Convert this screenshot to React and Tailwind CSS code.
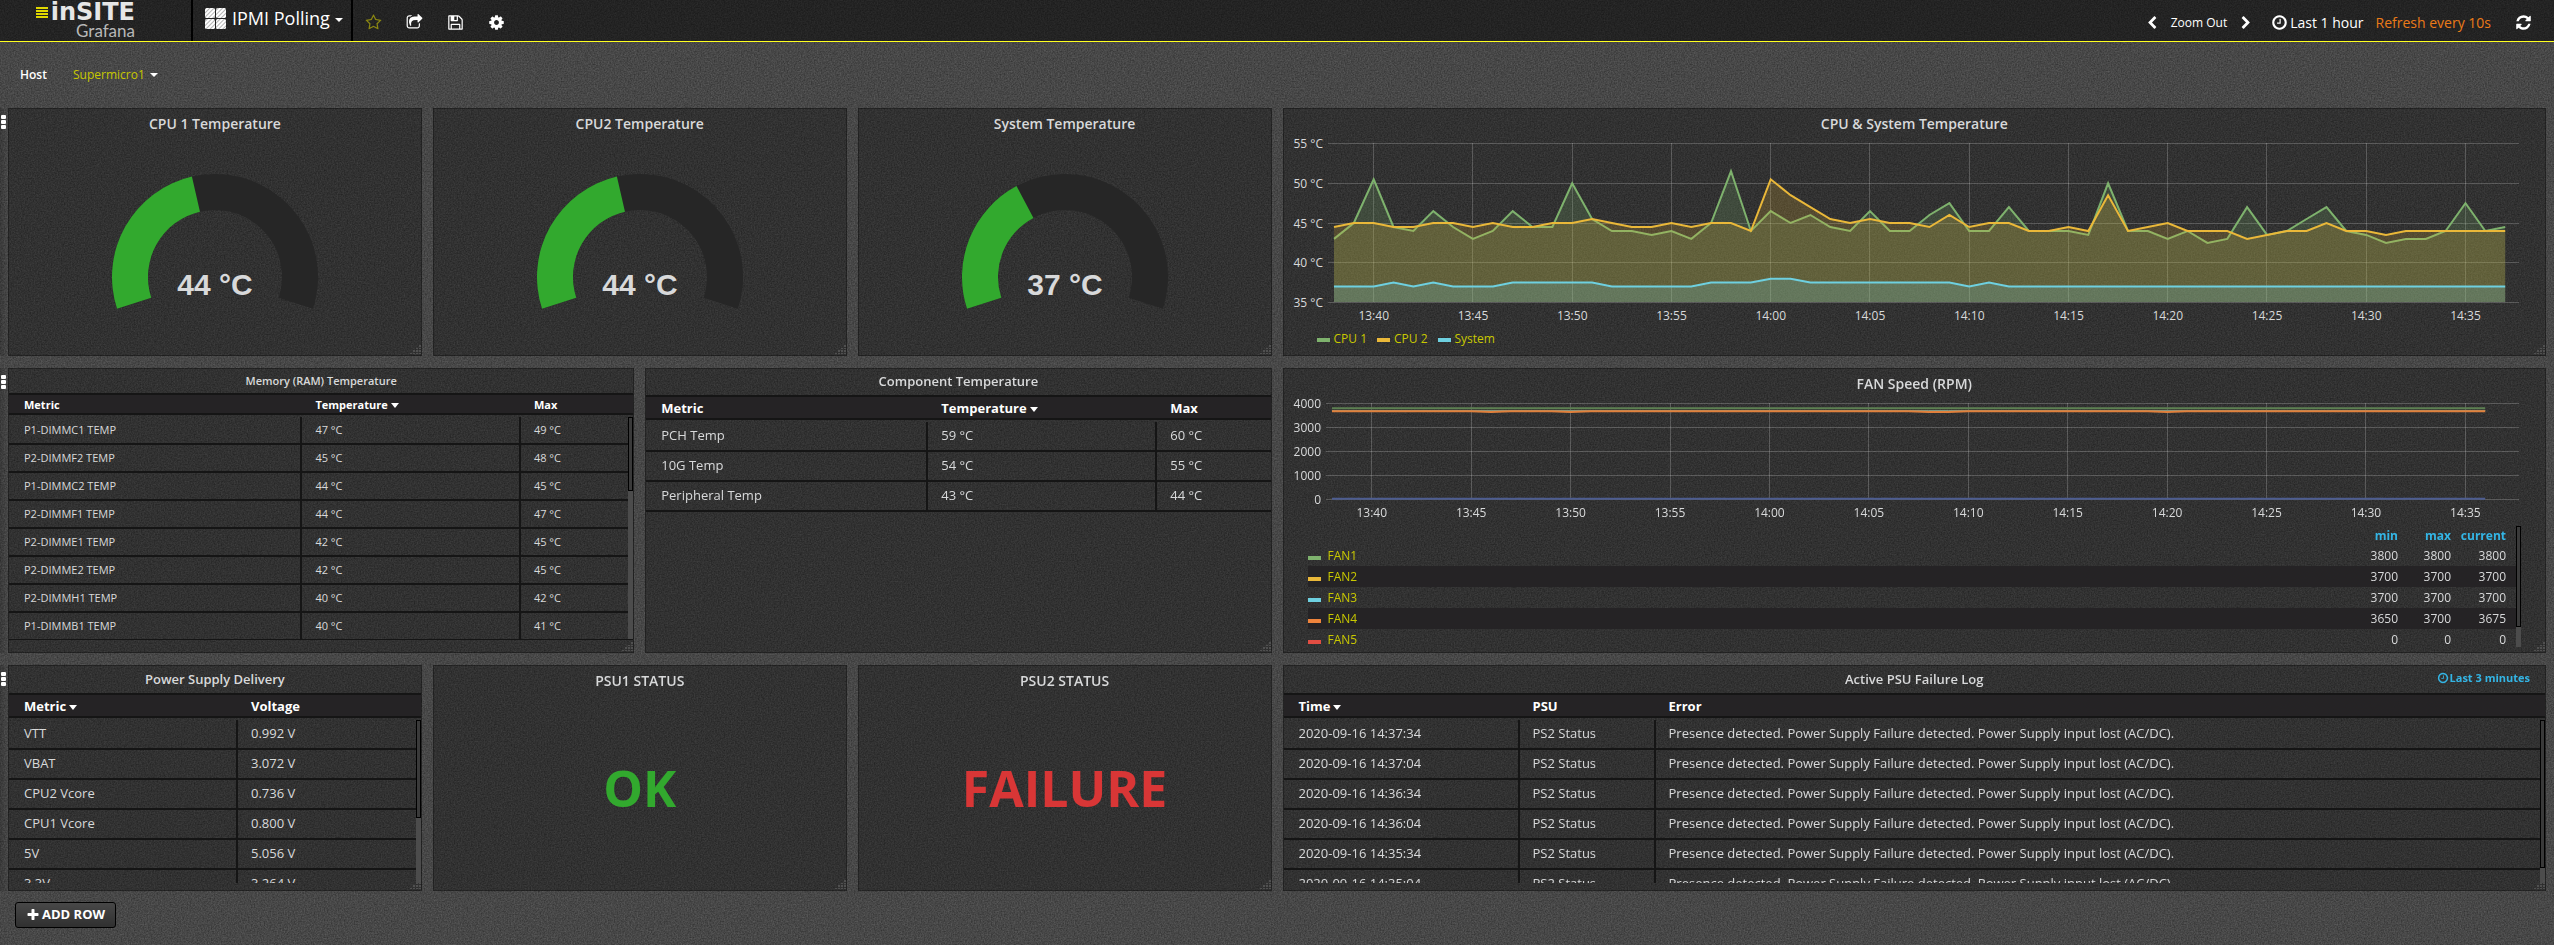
import { useEffect, useRef, useState } from "react";

/* ---------- icons (1792 unit grid) ---------- */

const ICONS = {
  star: "M1201 1004l306-297-422-62-189-382-189 382-422 62 306 297-73 421 378-199 377 199zm527-357q0 22-26 48l-363 354 86 500q1 7 1 20 0 50-41 50-19 0-40-12l-449-236-449 236q-22 12-40 12-21 0-31.5-14.5t-10.5-35.5q0-6 2-20l86-500-364-354q-25-27-25-48 0-37 56-46l502-73 225-455q19-41 49-41t49 41l225 455 502 73q56 9 56 46z",
  share: "M1472 989v259q0 119-84.5 203.5t-203.5 84.5h-832q-119 0-203.5-84.5t-84.5-203.5v-832q0-119 84.5-203.5t203.5-84.5h255q13 0 22.5 9.5t9.5 22.5q0 27-26 32-77 26-133 60-10 4-16 4h-112q-66 0-113 47t-47 113v832q0 66 47 113t113 47h832q66 0 113-47t47-113v-214q0-19 18-29 28-13 54-37 16-16 35-8 21 9 21 29zm237-496l-384 384q-18 19-45 19-12 0-25-5-39-17-39-59v-192h-160q-323 0-438 131-119 137-74 473 3 23-20 34-8 2-12 2-16 0-26-13-10-14-21-31t-39.5-68.5-49.5-99.5-38.5-114-17.5-122q0-49 3.5-91t14-90 28-88 47-81.5 68.5-74 94.5-61.5 124.5-48.5 159.5-30.5 196.5-11h160v-192q0-42 39-59 13-5 25-5 26 0 45 19l384 384q19 19 19 45t-19 45z",
  save: "M512 1536h768v-384h-768v384zm896 0h128v-896q0-14-10-38.5t-20-34.5l-281-281q-10-10-34-20t-39-10v416q0 40-28 68t-68 28h-576q-40 0-68-28t-28-68v-416h-128v1280h128v-416q0-40 28-68t68-28h832q40 0 68 28t28 68v416zm-384-928v-320q0-13-9.5-22.5t-22.5-9.5h-192q-13 0-22.5 9.5t-9.5 22.5v320q0 13 9.5 22.5t22.5 9.5h192q13 0 22.5-9.5t9.5-22.5zm640 32v928q0 40-28 68t-68 28h-1344q-40 0-68-28t-28-68v-1344q0-40 28-68t68-28h928q40 0 88 20t76 48l280 280q28 28 48 76t20 88z",
  cog: "M1152 896q0-106-75-181t-181-75-181 75-75 181 75 181 181 75 181-75 75-181zm512-109v222q0 12-8 23t-20 13l-185 28q-19 54-39 91 35 50 107 138 10 12 10 25t-9 23q-27 37-99 108t-94 71q-12 0-26-9l-138-108q-44 23-91 38-16 136-29 186-7 28-36 28h-222q-14 0-24.5-8.5t-11.5-21.5l-28-184q-49-16-90-37l-141 107q-10 9-25 9-14 0-25-11-126-114-165-168-7-10-7-23 0-12 8-23 15-21 51-66.5t54-70.5q-27-50-41-99l-183-27q-13-2-21-12.5t-8-23.5v-222q0-12 8-23t19-13l186-28q14-46 39-92-40-57-107-138-10-12-10-24 0-10 9-23 26-36 98.5-107.5t94.5-71.5q13 0 26 10l138 107q44-23 91-38 16-136 29-186 7-28 36-28h222q14 0 24.5 8.5t11.5 21.5l28 184q49 16 90 37l142-107q9-9 24-9 13 0 25 10 129 119 165 170 7 8 7 22 0 12-8 23-15 21-51 66.5t-54 70.5q26 50 41 98l183 28q13 2 21 12.5t8 23.5z",
  refresh: "M1639 1056q0 5-1 7-64 268-268 434.5t-478 166.5q-146 0-282.5-55t-243.5-157l-129 129q-19 19-45 19t-45-19-19-45v-448q0-26 19-45t45-19h448q26 0 45 19t19 45-19 45l-137 137q71 66 161 102t187 36q134 0 250-65t186-179q11-17 53-117 8-23 30-23h192q13 0 22.5 9.5t9.5 22.5zm25-800v448q0 26-19 45t-45 19h-448q-26 0-45-19t-19-45 19-45l138-138q-148-137-349-137-134 0-250 65t-186 179q-11 17-53 117-8 23-30 23h-199q-13 0-22.5-9.5t-9.5-22.5v-7q65-268 270-434.5t480-166.5q146 0 284 55.5t245 156.5l130-129q19-19 45-19t45 19 19 45z",
  clock: "M1024 544v448q0 14-9 23t-23 9h-320q-14 0-23-9t-9-23v-64q0-14 9-23t23-9h224v-352q0-14 9-23t23-9h64q14 0 23 9t9 23zm416 352q0-148-73-273t-198-198-273-73-273 73-198 198-73 273 73 273 198 198 273 73 273-73 198-198 73-273zm224 0q0 209-103 385.5t-279.5 279.5-385.5 103-385.5-103-279.5-279.5-103-385.5 103-385.5 279.5-279.5 385.5-103 385.5 103 279.5 279.5 103 385.5z",
  left: "M1427 301l-531 531 531 531q19 19 19 45t-19 45l-166 166q-19 19-45 19t-45-19l-742-742q-19-19-19-45t19-45l742-742q19-19 45-19t45 19l166 166q19 19 19 45t-19 45z",
  right: "M365 301l531 531-531 531q-19 19-19 45t19 45l166 166q19 19 45 19t45-19l742-742q19-19 19-45t-19-45l-742-742q-19-19-45-19t-45 19l-166 166q-19 19-19 45t19 45z",
  plus: "M1600 736v192q0 40-28 68t-68 28h-416v416q0 40-28 68t-68 28h-192q-40 0-68-28t-28-68v-416h-416q-40 0-68-28t-28-68v-192q0-40 28-68t68-28h416v-416q0-40 28-68t68-28h192q40 0 68 28t28 68v416h416q40 0 68 28t28 68z",
};

function Icon({ name, className = "size-4" }) {
  return (
    <svg viewBox="0 0 1792 1792" fill="currentColor" aria-hidden="true" className={`shrink-0 ${className}`}>
      <path d={ICONS[name]} />
    </svg>
  );
}

function Caret() {
  return (
    <svg viewBox="0 0 8 4" fill="currentColor" aria-hidden="true" className="h-1 w-2 shrink-0">
      <path d="M0 0h8L4 4z" />
    </svg>
  );
}

function Tiles() {
  return (
    <svg viewBox="0 0 21 21" aria-hidden="true" className="size-[21px]">
      <defs>
        <pattern id="hatch" width="3" height="3" patternUnits="userSpaceOnUse" patternTransform="rotate(45)">
          <rect width="3" height="3" fill="#ffffff" />
          <rect width="1" height="3" fill="#b4b4b4" />
        </pattern>
      </defs>
      {[0, 11].map((x) =>
        [0, 11].map((y) => <rect key={`${x}${y}`} x={x} y={y} width="10" height="10" rx="1.5" fill="url(#hatch)" />)
      )}
    </svg>
  );
}

/* ---------- page furniture ---------- */

function Texture() {
  return (
    <svg aria-hidden="true" className="absolute inset-0 -z-10 size-full">
      <filter id="grain" x="0" y="0" width="100%" height="100%" colorInterpolationFilters="sRGB">
        <feTurbulence type="fractalNoise" baseFrequency="0.7" numOctaves="2" seed="4" />
        <feColorMatrix values="0.2 0 0 0 0.18  0.2 0 0 0 0.18  0.2 0 0 0 0.18  0 0 0 0 1" />
      </filter>
      <rect width="100%" height="100%" filter="url(#grain)" />
    </svg>
  );
}

function Logo() {
  return (
    <a href="#home" className="flex h-full w-[193px] shrink-0 flex-col items-end border-r-2 border-black pt-px pr-14">
      <span className="flex items-center gap-[3px]">
        <span className="flex flex-col gap-[1px]">
          <span className="h-[2px] w-3 bg-[#e0d800]" />
          <span className="h-[2px] w-3 bg-[#e0d800]" />
          <span className="h-[2px] w-3 bg-[#e0d800]" />
          <span className="h-[2px] w-3 bg-[#e0d800]" />
        </span>
        <span className="font-['DejaVu_Sans',sans-serif] text-2xl leading-[22px] font-bold text-[#e6e6e6]">inSITE</span>
      </span>
      <span className="font-['Lato',sans-serif] text-[17px] leading-[15px] text-[#b8b8b8]">Grafana</span>
    </a>
  );
}

function TopBar() {
  return (
    <header className="flex h-[42px] items-center border-b border-[#ffff20] bg-black/50 text-white">
      <Logo />
      <button type="button" className="flex h-full items-center border-r-2 border-black pr-2 pl-3 pb-[5px]">
        <Tiles />
        <span className="ml-[6px] text-lg">IPMI Polling</span>
        <span className="mt-1 ml-[5px]"><Caret /></span>
      </button>
      <div className="flex items-center gap-6 pt-1 pl-3">
        <button type="button" aria-label="Mark as favorite" className="text-[#8c8812]"><Icon name="star" className="size-[17px]" /></button>
        <button type="button" aria-label="Share dashboard"><Icon name="share" className="size-[17px]" /></button>
        <button type="button" aria-label="Save dashboard"><Icon name="save" className="size-[17px]" /></button>
        <button type="button" aria-label="Settings"><Icon name="cog" className="size-[17px]" /></button>
      </div>
      <div className="ml-auto flex items-center pt-1 pr-[22px]">
        <button type="button" aria-label="Shift time range back"><Icon name="left" className="size-[14px]" /></button>
        <button type="button" className="mx-3 text-xs">Zoom Out</button>
        <button type="button" aria-label="Shift time range forward"><Icon name="right" className="size-[14px]" /></button>
        <button type="button" className="ml-[18px] flex items-center gap-[2px] text-sm">
          <Icon name="clock" className="size-[17px]" />
          Last 1 hour
        </button>
        <button type="button" className="ml-3 text-sm text-[#eb7b18]">Refresh every 10s</button>
        <button type="button" aria-label="Refresh" className="ml-6"><Icon name="refresh" className="size-[17px]" /></button>
      </div>
    </header>
  );
}

function Row({ height, children }) {
  return (
    <section className={`flex ${height}`}>
      <button type="button" aria-label="Row menu" className="flex w-2 shrink-0 flex-col gap-[1px] bg-linear-to-r from-black/20 to-transparent pt-[7px] pl-[1px]">
        <span className="h-1 w-[5px] rounded-[1px] bg-white" />
        <span className="h-1 w-[5px] rounded-[1px] bg-white" />
        <span className="h-1 w-[5px] rounded-[1px] bg-white" />
      </button>
      <div className="grid min-w-0 flex-1 grid-cols-12 gap-[11px]">{children}</div>
    </section>
  );
}

function Panel({ span, title, titleClass = "h-[31px] pb-px text-sm", info, children }) {
  return (
    <article className={`relative flex min-h-0 min-w-0 flex-col border border-black/30 bg-black/30 ${span}`}>
      <h2 className={`flex shrink-0 items-center justify-center font-semibold text-[#d8d9da] ${titleClass}`}>{title}</h2>
      {info && (
        <span className="absolute top-[5px] right-[15px] flex items-center gap-[1px] text-[11px] font-bold text-[#33b5e5]">
          <Icon name="clock" className="size-3" />
          {info}
        </span>
      )}
      {children}
      <svg viewBox="0 0 11 10" fill="#505050" aria-hidden="true" className="absolute right-0 bottom-0 h-[10px] w-[11px]">
        <path d="M9 0h2v2H9zM9 3h2v1H9zM6 3h2v1H6zM9 5h2v2H9zM6 5h2v2H6zM3 5h2v2H3zM9 8h2v1H9zM6 8h2v1H6zM3 8h2v1H3zM0 8h2v1H0z" />
      </svg>
    </article>
  );
}

function Scrollbar({ place, thumb }) {
  return (
    <div aria-hidden="true" className={`absolute w-[5px] bg-[#4c4c4c] ${place}`}>
      <div className={`border border-black bg-[#3a3a3a] ${thumb}`} />
    </div>
  );
}

/* ---------- gauges and status ---------- */

function arc(from, to, outer, inner, c) {
  const at = (deg, r) => {
    const a = ((deg - 90) * Math.PI) / 180;
    return `${c + r * Math.cos(a)} ${c + r * Math.sin(a)}`;
  };
  const big = to - from > 180 ? 1 : 0;
  return `M${at(from, outer)}A${outer} ${outer} 0 ${big} 1 ${at(to, outer)}L${at(to, inner)}A${inner} ${inner} 0 ${big} 0 ${at(from, inner)}Z`;
}

function Gauge({ title, value }) {
  const end = -108 + (216 * value) / 100;
  return (
    <Panel span="col-span-2" title={title}>
      <svg viewBox="0 0 206 140" role="img" aria-label={title} className="mx-auto mt-[34px] h-[140px] w-[206px]">
        <path d={arc(-108, 108, 103, 67, 103)} fill="#262626" />
        <path d={arc(-108, end, 103, 67, 103)} fill="#32a92e" />
        <text x="103" y="121" textAnchor="middle" fill="#d8d9da" className="font-['Liberation_Sans',sans-serif] text-[30px] font-bold">
          {value} °C
        </text>
      </svg>
    </Panel>
  );
}

function Status({ title, value, color }) {
  return (
    <Panel span="col-span-2" title={title}>
      <div className={`flex flex-1 items-center justify-center pb-3 text-[50px] leading-none font-bold ${color}`}>{value}</div>
    </Panel>
  );
}

/* ---------- tables ---------- */

function DataTable({ columns, rows, sorted, widths, head, body, text }) {
  return (
    <div className="min-h-0 overflow-y-auto [scrollbar-width:none]">
      <table className={`w-full table-fixed border-separate border-spacing-0 text-left ${text}`}>
        <colgroup>
          {widths.map((w, i) => <col key={i} className={w} />)}
        </colgroup>
        <thead className="sticky top-0">
          <tr className={head}>
            {columns.map((c, i) => (
              <th key={c} scope="col" className="border-y-2 border-[#151515] bg-[#252325] p-0 pt-px pl-[13px] font-bold text-white first:pl-[15px]">
                <span className="flex items-center gap-[3px]">
                  {c}
                  {i === sorted && (
                    <svg viewBox="0 0 8 5" fill="currentColor" aria-hidden="true" className="mt-[2px] h-[5px] w-2"><path d="M0 0h8L4 5z" /></svg>
                  )}
                </span>
              </th>
            ))}
          </tr>
        </thead>
        <tbody className="text-[#d8d9da] before:block before:h-[2px] before:content-['']">
          {rows.map((r, n) => (
            <tr key={n} className={body}>
              {r.map((v, i) => (
                <td key={i} className="border-r-2 border-b-2 border-[#151515] p-0 pl-[13px] whitespace-nowrap first:pl-[15px] last:border-r-0">{v}</td>
              ))}
            </tr>
          ))}
        </tbody>
      </table>
    </div>
  );
}

const MEMORY = [
  ["P1-DIMMC1 TEMP", "47 °C", "49 °C"],
  ["P2-DIMMF2 TEMP", "45 °C", "48 °C"],
  ["P1-DIMMC2 TEMP", "44 °C", "45 °C"],
  ["P2-DIMMF1 TEMP", "44 °C", "47 °C"],
  ["P2-DIMME1 TEMP", "42 °C", "45 °C"],
  ["P2-DIMME2 TEMP", "42 °C", "45 °C"],
  ["P2-DIMMH1 TEMP", "40 °C", "42 °C"],
  ["P1-DIMMB1 TEMP", "40 °C", "41 °C"],
];

const COMPONENTS = [
  ["PCH Temp", "59 °C", "60 °C"],
  ["10G Temp", "54 °C", "55 °C"],
  ["Peripheral Temp", "43 °C", "44 °C"],
];

const VOLTAGES = [
  ["VTT", "0.992 V"],
  ["VBAT", "3.072 V"],
  ["CPU2 Vcore", "0.736 V"],
  ["CPU1 Vcore", "0.800 V"],
  ["5V", "5.056 V"],
  ["3.3V", "3.264 V"],
];

const FAILURES = ["14:37:34", "14:37:04", "14:36:34", "14:36:04", "14:35:34", "14:35:04"].map((t) => [
  `2020-09-16 ${t}`,
  "PS2 Status",
  "Presence detected. Power Supply Failure detected. Power Supply input lost (AC/DC).",
]);

/* ---------- time series ---------- */

const CPU1 = [43, 45, 50.5, 44.5, 44, 46.5, 44.5, 43, 44, 46.5, 44.5, 44.5, 50, 45.5, 44, 44, 43.5, 44, 43, 45, 51.5, 44, 46.5, 45, 46, 44.5, 44, 46.5, 44, 44, 46, 47.5, 44, 44, 47, 44, 44, 44, 43.5, 50, 44, 44, 43, 44, 42.5, 43, 47, 43.5, 44, 45.5, 47, 44, 43.5, 42.5, 43, 43, 44, 47.5, 44, 44.5];
const CPU2 = [44.5, 45, 45, 44.5, 44.5, 45, 45, 44.5, 45, 44.5, 44.5, 45, 45, 45.5, 45, 44.5, 44.5, 45, 44.5, 45, 45, 44, 50.5, 48.5, 47, 45.5, 45, 45.5, 45, 45, 44.5, 46, 44.5, 45, 45, 44, 44, 44.5, 44, 48.5, 44, 44.5, 45, 44, 44, 44, 43, 43.5, 44, 44, 45, 44, 44, 43.5, 44, 44, 44, 44, 44, 44];
const SYSTEM = [37, 37, 37, 37.5, 37, 37.5, 37, 37, 37, 37.5, 37.5, 37.5, 37.5, 37.5, 37, 37, 37, 37, 37, 37.5, 37.5, 37.5, 38, 38, 37.5, 37.5, 37.5, 37.5, 37.5, 37.5, 37.5, 37.5, 37, 37.5, ...Array(26).fill(37)];

const TEMPERATURES = [
  { name: "CPU 1", color: "#7eb26d", swatch: "bg-[#7eb26d]", points: CPU1, fill: true },
  { name: "CPU 2", color: "#eab839", swatch: "bg-[#eab839]", points: CPU2, fill: true },
  { name: "System", color: "#6ed0e0", swatch: "bg-[#6ed0e0]", points: SYSTEM, fill: true },
];

const level = (v, dips = []) => Array.from({ length: 59 }, (_, i) => (dips.includes(i) ? v - 35 : v));

const FAN_LINES = [
  { name: "FAN1", color: "#5d8052", points: level(3800) },
  { name: "FAN2", color: "#a58a3c", points: level(3700), width: 1 },
  { name: "FAN3", color: "#7f9f95", points: level(3700), width: 1 },
  { name: "FAN4", color: "#e0803c", points: level(3680, [8, 12, 30, 31, 42]), width: 2 },
  { name: "FAN5", color: "#4d5d91", points: level(30) },
];

const FANS = [
  { name: "FAN1", swatch: "bg-[#7eb26d]", stats: [3800, 3800, 3800] },
  { name: "FAN2", swatch: "bg-[#eab839]", stats: [3700, 3700, 3700] },
  { name: "FAN3", swatch: "bg-[#6ed0e0]", stats: [3700, 3700, 3700] },
  { name: "FAN4", swatch: "bg-[#ef843c]", stats: [3650, 3700, 3675] },
  { name: "FAN5", swatch: "bg-[#e24d42]", stats: [0, 0, 0] },
];

const TIMES = ["13:40", "13:45", "13:50", "13:55", "14:00", "14:05", "14:10", "14:15", "14:20", "14:25", "14:30", "14:35"];

function TimeChart({ label, series, ticks, unit = "", height, bottom, left }) {
  const ref = useRef(null);
  const [width, setWidth] = useState(1261);
  useEffect(() => {
    const watch = new ResizeObserver(([e]) => setWidth(Math.round(e.contentRect.width)));
    watch.observe(ref.current);
    return () => watch.disconnect();
  }, []);

  const top = 3;
  const right = width - 27;
  const min = ticks[ticks.length - 1];
  const x = (m) => left + 6 + (m * (right - left)) / 60;
  const y = (v) => bottom - ((v - min) * (bottom - top)) / (ticks[0] - min);
  const crisp = (n) => Math.round(n) + 0.5;

  return (
    <div ref={ref} className="w-full shrink-0">
      <svg width={width} height={height} role="img" aria-label={label} className="block overflow-visible text-xs">
        <g stroke="#ffffff" strokeOpacity="0.2">
          {ticks.map((t) => <path key={t} d={`M${left} ${crisp(y(t))}H${right}`} />)}
          {TIMES.map((t, i) => <path key={t} d={`M${crisp(x(2 + i * 5) - 0.5)} ${top}V${bottom}`} />)}
        </g>
        <g fill="#d8d9da">
          {ticks.map((t) => <text key={t} x={left - 5} y={Math.round(y(t)) + 5} textAnchor="end">{t}{unit}</text>)}
          {TIMES.map((t, i) => <text key={t} x={x(2 + i * 5)} y={bottom + 18} textAnchor="middle">{t}</text>)}
        </g>
        {series.map((s) => {
          const line = s.points.map((v, m) => `${x(m).toFixed(1)} ${(y(v) + 0.5).toFixed(1)}`).join("L");
          return (
            <g key={s.name}>
              {s.fill && <path d={`M${x(0)} ${bottom}L${line}V${bottom}Z`} fill={s.color} fillOpacity="0.2" />}
              <path d={`M${line}`} fill="none" stroke={s.color} strokeWidth={s.width ?? 2} />
            </g>
          );
        })}
      </svg>
    </div>
  );
}

function TemperatureChart() {
  return (
    <Panel span="col-span-6" title="CPU &amp; System Temperature">
      <TimeChart label="CPU and system temperature" series={TEMPERATURES} ticks={[55, 50, 45, 40, 35]} unit=" °C" height={183} bottom={162} left={44} />
      <ul className="flex flex-1 items-center gap-[10px] pl-[33px] text-xs text-[#c8c800]">
        {TEMPERATURES.map((s) => (
          <li key={s.name}>
            <button type="button" className="flex items-center gap-1">
              <span className={`mt-px h-1 w-[13px] ${s.swatch}`} />
              {s.name}
            </button>
          </li>
        ))}
      </ul>
    </Panel>
  );
}

function FanChart() {
  return (
    <Panel span="col-span-6" title="FAN Speed (RPM)">
      <TimeChart label="Fan speed" series={FAN_LINES} ticks={[4000, 3000, 2000, 1000, 0]} height={127} bottom={99} left={42} />
      <div className="mr-[29px] mb-[5px] ml-6 min-h-0 flex-1 overflow-y-auto [scrollbar-width:none]">
        <table className="w-full border-separate border-spacing-0 text-right text-xs text-[#d8d9da]">
          <thead>
            <tr className="h-[18px] leading-[18px] text-[#33b5e5]">
              <td className="p-0" />
              <th scope="col" className="w-[54px] p-0 font-bold">min</th>
              <th scope="col" className="w-[53px] p-0 font-bold">max</th>
              <th scope="col" className="w-[65px] p-0 pr-[10px] font-bold">current</th>
            </tr>
          </thead>
          <tbody>
            {FANS.map((f) => (
              <tr key={f.name} className="h-[21px] leading-5 even:bg-[#252325]">
                <th scope="row" className="p-0 text-left font-normal text-[#c8c800]">
                  <button type="button" className="flex items-center gap-[7px]">
                    <span className={`mt-1 h-1 w-[13px] ${f.swatch}`} />
                    {f.name}
                  </button>
                </th>
                {f.stats.map((v, i) => <td key={i} className="p-0 last:pr-[10px]">{v}</td>)}
              </tr>
            ))}
          </tbody>
        </table>
      </div>
      <Scrollbar place="right-[24px] bottom-[5px] h-[121px]" thumb="h-[101px]" />
    </Panel>
  );
}

/* ---------- page ---------- */

export default function App() {
  return (
    <div className="relative isolate min-h-screen bg-[#484848] font-['Open_Sans','Noto_Sans',sans-serif] text-xs">
      <Texture />
      <TopBar />

      <main>
        <div className="flex h-[66px] items-center pl-5 text-xs text-white">
          <span id="host-label" className="w-[53px] font-semibold">Host</span>
          <button type="button" aria-labelledby="host-label" className="flex items-center gap-[5px]">
            <span className="text-[#c8c800]">Supermicro1</span>
            <Caret />
          </button>
        </div>

        <div className="flex flex-col gap-3 pr-2">
          <Row height="h-[248px]">
            <Gauge title="CPU 1 Temperature" value={44} />
            <Gauge title="CPU2 Temperature" value={44} />
            <Gauge title="System Temperature" value={37} />
            <TemperatureChart />
          </Row>

          <Row height="h-[285px]">
            <Panel span="col-span-3 pb-3" title="Memory (RAM) Temperature" titleClass="h-6 text-[11px]">
              <DataTable
                columns={["Metric", "Temperature", "Max"]}
                rows={MEMORY}
                sorted={1}
                widths={["w-[47%]", "w-[35%]", "w-[18%]"]}
                head="h-[22px] leading-[17px]"
                body="h-7"
                text="text-[11px]"
              />
              <Scrollbar place="top-[48px] right-0 bottom-[13px]" thumb="h-[74px]" />
            </Panel>
            <Panel span="col-span-3 pb-3" title="Component Temperature" titleClass="h-[26px] text-[13px]">
              <DataTable
                columns={["Metric", "Temperature", "Max"]}
                rows={COMPONENTS}
                sorted={1}
                widths={["w-[282px]", "w-[229px]", "w-auto"]}
                head="h-[25px] leading-5"
                body="h-[30px]"
                text="text-[13px]"
              />
            </Panel>
            <FanChart />
          </Row>

          <Row height="h-[226px]">
            <Panel span="col-span-2 pb-[7px]" title="Power Supply Delivery" titleClass="h-[27px] text-[13px]">
              <DataTable
                columns={["Metric", "Voltage"]}
                rows={VOLTAGES}
                sorted={0}
                widths={["w-[229px]", "w-auto"]}
                head="h-[25px] leading-5"
                body="h-[30px]"
                text="text-[13px]"
              />
              <Scrollbar place="top-[54px] right-0 bottom-[7px]" thumb="h-[98px]" />
            </Panel>
            <Status title="PSU1 STATUS" value="OK" color="text-[#32a92e]" />
            <Status title="PSU2 STATUS" value="FAILURE" color="text-[#d93636]" />
            <Panel span="col-span-6 pb-[7px]" title="Active PSU Failure Log" titleClass="h-[27px] text-[13px]" info="Last 3 minutes">
              <DataTable
                columns={["Time", "PSU", "Error"]}
                rows={FAILURES}
                sorted={0}
                widths={["w-[236px]", "w-[136px]", "w-auto"]}
                head="h-[25px] leading-5"
                body="h-[30px]"
                text="text-[13px]"
              />
              <Scrollbar place="top-[54px] right-0 bottom-[7px]" thumb="h-[148px]" />
            </Panel>
          </Row>
        </div>

        <button type="button" className="mt-[11px] ml-[15px] flex h-[26px] items-center gap-[2px] rounded-[3px] border border-black bg-linear-to-b from-[#484848] to-[#303030] px-[10px] text-[13px] font-bold text-white">
          <Icon name="plus" className="size-[14px]" />
          ADD ROW
        </button>
      </main>
    </div>
  );
}
